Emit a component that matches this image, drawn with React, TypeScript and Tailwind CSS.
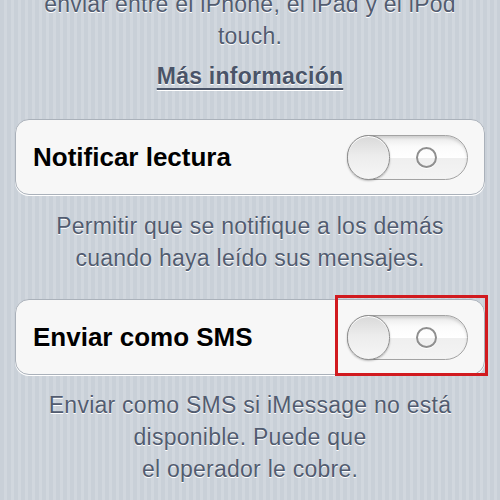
import React from "react";

function Toggle() {
  return (
    <div className="relative h-[45px] w-[121px] rounded-full border border-[#a3a3a3] bg-[linear-gradient(180deg,#e9e9e9_0%,#fbfbfb_25%,#ffffff_50%,#efefef_52%,#f4f4f4_100%)] shadow-[inset_0_2px_3px_rgba(0,0,0,0.12)]">
      {/* knob */}
      <div className="absolute left-[-1px] top-[-1px] h-[45px] w-[43px] rounded-full border border-[#8e8e8e] bg-[linear-gradient(180deg,#d9d9d9_0%,#ececec_45%,#f6f6f6_100%)] shadow-[0_1px_2px_rgba(0,0,0,0.25),inset_0_1px_0_#ffffff]" />
      {/* "off" glyph */}
      <div className="absolute left-[68px] top-[11px] h-[21px] w-[21px] rounded-full border-[2.5px] border-[#8f8f8f] shadow-[0_1px_0_#ffffff]" />
    </div>
  );
}

function Row({ label, children }: { label: string; children?: React.ReactNode }) {
  return (
    <div className="relative mx-[15px] flex h-[76px] items-center justify-between rounded-[14px] border border-[#aab1ba] bg-[#f7f7f7] pl-[17px] pr-[16px] shadow-[0_1px_0_#ffffff]">
      <span className="text-[26px] font-bold text-black [text-shadow:0_1px_0_#ffffff]">{label}</span>
      <Toggle />
      {children}
    </div>
  );
}

export default function App() {
  return (
    <div className="h-[500px] w-[500px] overflow-hidden bg-[repeating-linear-gradient(90deg,#c9d0d8_0px,#c9d0d8_4px,#d1d7de_4px,#d1d7de_7px)] font-['Liberation_Sans',Arial,sans-serif]">
      <div className="-mt-[12px] text-center text-[23px] leading-[32px] tracking-[0.25px] text-[#525c70] [text-shadow:0_1px_0_#ffffff]">
        <p>
          enviar entre el iPhone, el iPad y el iPod
          <br />
          touch.
        </p>
        <p className="mt-[8px] font-bold text-[#4a5468] underline decoration-2 underline-offset-[4px]">
          Más información
        </p>
      </div>

      <div className="mt-[27px]">
        <Row label="Notificar lectura" />
      </div>

      <p className="mt-[15px] text-center text-[23px] leading-[32px] tracking-[0.25px] text-[#525c70] [text-shadow:0_1px_0_#ffffff]">
        Permitir que se notifique a los demás
        <br />
        cuando haya leído sus mensajes.
      </p>

      <div className="mt-[25px]">
        <Row label="Enviar como SMS">
          <div className="absolute left-[319px] top-[-5px] h-[81px] w-[153px] border-[3px] border-[#d11a1f]" />
        </Row>
      </div>

      <p className="mt-[14px] text-center text-[23px] leading-[32px] tracking-[0.25px] text-[#525c70] [text-shadow:0_1px_0_#ffffff]">
        Enviar como SMS si iMessage no está
        <br />
        disponible. Puede que
        <br />
        el operador le cobre.
      </p>
    </div>
  );
}
